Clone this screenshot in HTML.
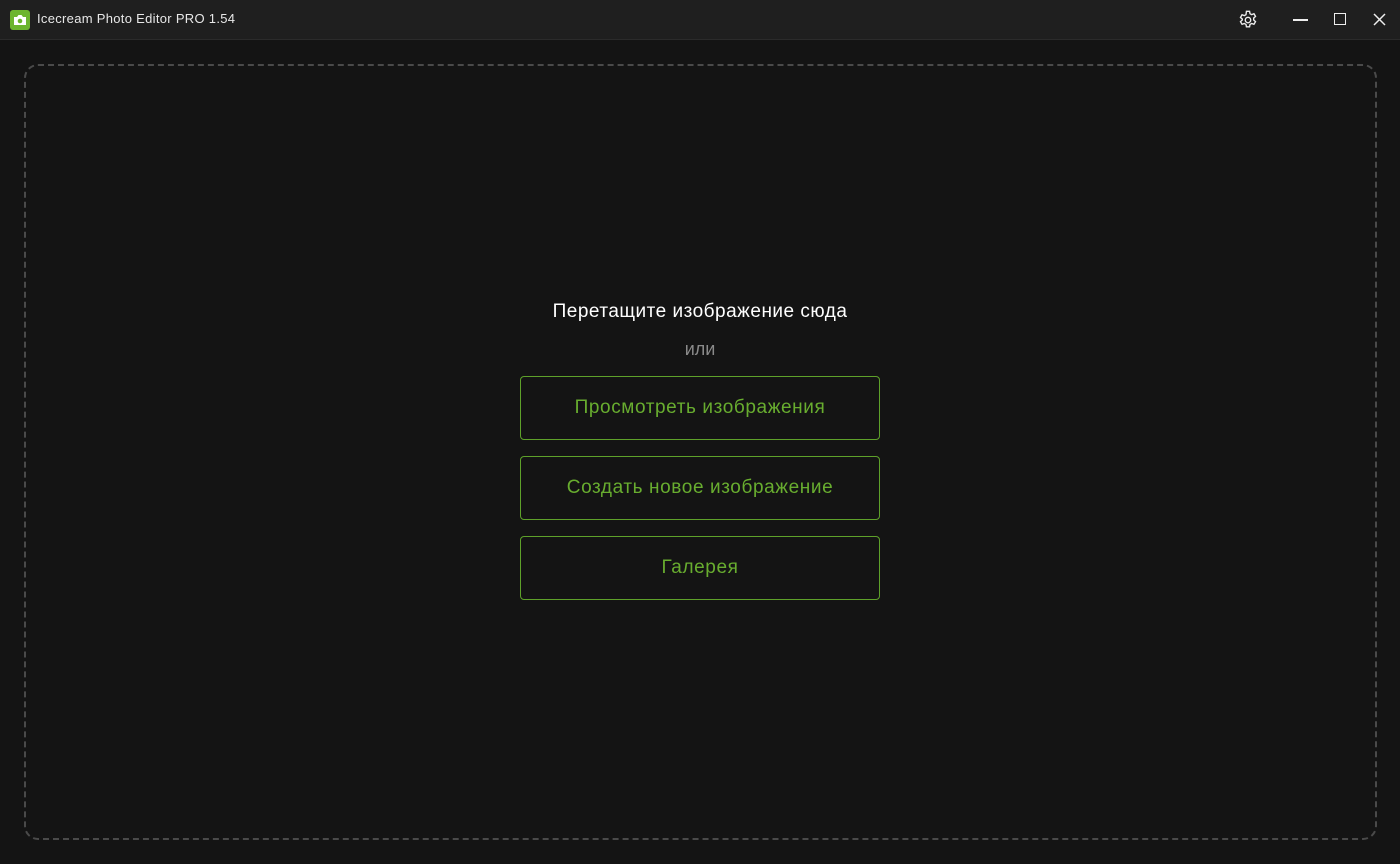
<!DOCTYPE html>
<html><head><meta charset="utf-8"><style>
body{margin:0;width:1400px;height:864px;background:#141414;font-family:"Liberation Sans","DejaVu Sans",sans-serif;overflow:hidden;position:relative}
.tb{position:absolute;left:0;top:0;width:1400px;height:39px;background:#1f1f1f;border-bottom:1px solid #2b2b2b}
.logo{position:absolute;left:10px;top:10px;width:20px;height:20px;background:#6cb52d;border-radius:3px}
.title{position:absolute;left:37px;top:11px;color:#e8e8e8;font-size:13px;letter-spacing:.3px}
.drop{position:absolute;left:24px;top:64px;width:1349px;height:772px;border:2px dashed #4a4a4a;border-radius:14px}
.t1{position:absolute;left:0;width:1400px;text-align:center;top:301px;color:#fff;font-size:19px;letter-spacing:.5px}
.t2{position:absolute;left:0;width:1400px;text-align:center;top:339px;color:#8a8a8a;font-size:18px}
.btn{position:absolute;left:520px;width:358px;height:62px;border:1px solid #5ea12a;border-radius:4px;color:#68ad2f;font-size:19px;letter-spacing:.6px;text-align:center;line-height:62px;box-sizing:content-box}
</style></head><body>
<div class="tb">
<div class="logo"><svg width="20" height="20" viewBox="0 0 20 20"><path d="M4 7h3l1.5-2h3L13 7h3v8H4z" fill="#fff"/><circle cx="10" cy="11" r="2.3" fill="#6cb52d"/></svg></div>
<div class="title">Icecream Photo Editor PRO 1.54</div>
<svg style="position:absolute;left:1237px;top:9px" width="22" height="22" viewBox="0 0 24 24" fill="none" stroke="#eee" stroke-width="1.5"><circle cx="12" cy="12" r="3"/><path d="M10.3 2.5h3.4l.5 2.6 1.8 1 2.5-.9 1.7 2.9-2 1.8v2.1l2 1.8-1.7 2.9-2.5-.9-1.8 1-.5 2.6h-3.4l-.5-2.6-1.8-1-2.5.9-1.7-2.9 2-1.8V11l-2-1.8 1.7-2.9 2.5.9 1.8-1z"/></svg>
<div style="position:absolute;left:1293px;top:19px;width:15px;height:1.5px;background:#eee"></div>
<div style="position:absolute;left:1334px;top:13px;width:10px;height:10px;border:1.5px solid #eee"></div>
<svg style="position:absolute;left:1373px;top:13px" width="13" height="13" viewBox="0 0 13 13" stroke="#eee" stroke-width="1.5"><path d="M1 1l11 11M12 1L1 12"/></svg>
</div>
<div class="drop"></div>
<div class="t1">Перетащите изображение сюда</div>
<div class="t2">или</div>
<div class="btn" style="top:376px">Просмотреть изображения</div>
<div class="btn" style="top:456px">Создать новое изображение</div>
<div class="btn" style="top:536px">Галерея</div>
</body></html>
